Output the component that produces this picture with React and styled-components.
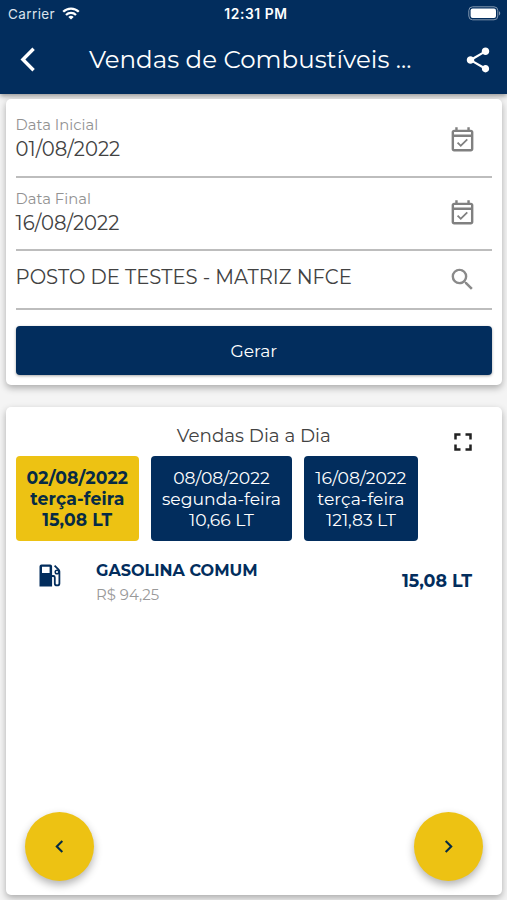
import React, { useState } from "react";
import styled, { createGlobalStyle } from "styled-components";
import {
  MdShare,
  MdOutlineEventAvailable,
  MdSearch,
  MdFullscreen,
  MdChevronLeft,
  MdChevronRight,
} from "react-icons/md";

const NAVY = "#022d5d";
const YELLOW = "#edc213";

const GlobalStyle = createGlobalStyle`
  * {
    box-sizing: border-box;
  }

  body {
    margin: 0;
    background-color: #f4f4f4;
    font-family: Montserrat, Inter, "Open Sans", sans-serif;
    color: #424242;
  }
`;

const Page = styled.div`
  display: flex;
  flex-direction: column;
  height: 900px;
  overflow: hidden;
`;

const Header = styled.header`
  height: 94px;
  flex-shrink: 0;
  background-color: ${NAVY};
  color: #ffffff;
  box-shadow: 0 2px 5px rgba(0, 0, 0, 0.4);
`;

const StatusBar = styled.div`
  display: grid;
  grid-template-columns: 1fr auto 1fr;
  align-items: center;
  height: 27px;
  padding: 0 6px 0 8px;
  font-family: Inter, sans-serif;
  font-size: 13.5px;
`;

const Carrier = styled.div`
  display: flex;
  align-items: center;
  gap: 7px;
  color: #dbe3ec;
  letter-spacing: 0.4px;
`;

const Clock = styled.div`
  padding-left: 3px;
  font-weight: 600;
  font-size: 13.8px;
  letter-spacing: 0.6px;
`;

const Battery = styled.svg`
  justify-self: end;
`;

const NavBar = styled.div`
  display: flex;
  align-items: center;
  height: 65px;
  padding: 0 14px 0 20px;
`;

const IconButton = styled.button`
  display: flex;
  padding: 0;
  border: none;
  background: none;
  color: ${(props) => props.$color || "inherit"};
  cursor: pointer;
`;

const Title = styled.h1`
  flex: 1;
  margin: 0 0 1px 53px;
  font-size: 24.5px;
  font-weight: 400;
  white-space: nowrap;
`;

const Card = styled.section`
  margin: 0 5px 0 6px;
  border-radius: 5px;
  background-color: #ffffff;
  box-shadow: 0 3px 7px rgba(0, 0, 0, 0.3);
`;

const FilterCard = styled(Card)`
  height: 286px;
  margin-top: 5px;
  padding: 0 10px 0 9.6px;
`;

const Field = styled.div`
  display: flex;
  align-items: center;
  justify-content: space-between;
  height: ${(props) => props.$height}px;
  padding-top: ${(props) => props.$top || 0}px;
  padding-right: 15px;
  border-bottom: 2px solid #bdbdbd;
`;

const FieldLabel = styled.div`
  font-size: 14.8px;
  line-height: 18px;
  color: #929292;
`;

const FieldValue = styled.div`
  font-size: 19.6px;
  line-height: 30px;
`;

const CompanyValue = styled(FieldValue)`
  padding-bottom: 5px;
`;

const GenerateButton = styled.button`
  width: 100%;
  height: 49px;
  margin-top: 16px;
  border: none;
  border-radius: 4px;
  background-color: ${NAVY};
  color: #ffffff;
  font-family: inherit;
  font-size: 17.1px;
  box-shadow: 0 1px 3px rgba(0, 0, 0, 0.35);
  cursor: pointer;
`;

const SalesCard = styled(Card)`
  display: flex;
  flex-direction: column;
  height: 488px;
  margin-top: 22px;
  padding: 0 10px 0 9.6px;
`;

const SalesHeader = styled.div`
  display: grid;
  grid-template-columns: 1fr auto 1fr;
  height: 48.6px;
  padding-top: 17px;
`;

const SalesTitle = styled.h2`
  grid-column: 2;
  margin: 0;
  font-size: 18.3px;
  font-weight: 400;
  line-height: 24px;
`;

const ExpandButton = styled(IconButton)`
  justify-self: end;
  margin: 3px 14px 0 0;
`;

const Days = styled.div`
  display: flex;
  gap: 12.2px;
`;

const Day = styled.button`
  width: ${(props) => props.$width}px;
  height: 85.4px;
  padding: 1px 0 0;
  border: none;
  border-radius: 4px;
  background-color: ${(props) => (props.$active ? YELLOW : NAVY)};
  color: ${(props) => (props.$active ? "#062b45" : "#ffffff")};
  font-family: inherit;
  font-size: 17.2px;
  font-weight: ${(props) => (props.$active ? 700 : 400)};
  line-height: 21px;
  letter-spacing: ${(props) => (props.$active ? 0.15 : 0)}px;
  cursor: pointer;
`;

const Product = styled.div`
  display: flex;
  height: 78px;
  padding: 17px 20px 0 23.4px;
`;

const ProductIcon = styled.div`
  display: flex;
  padding-top: 6px;
`;

const ProductInfo = styled.div`
  flex: 1;
  margin-left: 35px;
`;

const ProductName = styled.div`
  font-size: 16.1px;
  font-weight: 700;
  line-height: 24px;
  color: ${NAVY};
`;

const ProductPrice = styled.div`
  font-size: 14.9px;
  line-height: 27px;
  color: #999999;
`;

const ProductAmount = styled.div`
  font-size: 17.5px;
  font-weight: 700;
  line-height: 46px;
  color: ${NAVY};
`;

const Pager = styled.div`
  display: flex;
  justify-content: space-between;
  margin-top: auto;
  padding: 0 9px 14px 9.4px;
`;

const RoundButton = styled.button`
  display: flex;
  align-items: center;
  justify-content: center;
  width: 69px;
  height: 69px;
  padding: 0;
  border: none;
  border-radius: 50%;
  background-color: ${YELLOW};
  color: #062b45;
  box-shadow: 0 4px 8px rgba(0, 0, 0, 0.3);
  cursor: pointer;
`;

const WifiIcon = () => (
  <svg width="18" height="13" viewBox="0 0 18 13" fill="none" stroke="#fff">
    <path d="M1.2 4.8a11 11 0 0 1 15.6 0" strokeWidth="2.3" />
    <path d="M4 7.9a7 7 0 0 1 10 0" strokeWidth="2.2" />
    <path d="M9 12.6 6.3 10a3.9 3.9 0 0 1 5.4 0z" fill="#fff" stroke="none" />
  </svg>
);

const BatteryIcon = () => (
  <Battery width="33" height="15" viewBox="0 0 33 15">
    <rect x="0.8" y="0.8" width="29" height="13" rx="3.8" fill="none" stroke="#8297b0" />
    <rect x="2.6" y="2.6" width="25.4" height="9.4" rx="2" fill="#fff" />
    <path d="M31 5.2c1.7.6 1.7 3.6 0 4.2z" fill="#8297b0" />
  </Battery>
);

const BackIcon = () => (
  <svg width="16" height="25" viewBox="0 0 16 25" fill="none">
    <path d="M13.6 1.7 2.9 12.5l10.7 10.8" stroke="#fff" strokeWidth="3.4" />
  </svg>
);

const PumpIcon = () => (
  <svg width="22" height="23" viewBox="0 0 22 23">
    <path
      fillRule="evenodd"
      d="M2.5 0.5h8.6a2 2 0 0 1 2 2v20H0.5v-20a2 2 0 0 1 2-2zM3 2.8v6.3h7.6V2.8z"
      fill={NAVY}
    />
    <path
      d="M13 12h1.3c1 0 1.5.5 1.5 1.5v6c0 2.6 4.6 2.6 4.6 0V7.5c0-.8-.3-1.3-.8-1.8l-4-4"
      fill="none"
      stroke={NAVY}
      strokeWidth="1.8"
    />
    <circle cx="18" cy="8" r="1.8" fill="none" stroke={NAVY} strokeWidth="1.5" />
  </svg>
);

const days = [
  { date: "02/08/2022", weekday: "terça-feira", amount: "15,08 LT", width: 123.4 },
  { date: "08/08/2022", weekday: "segunda-feira", amount: "10,66 LT", width: 140.6 },
  { date: "16/08/2022", weekday: "terça-feira", amount: "121,83 LT", width: 113.8 },
];

const App = () => {
  const [selected, setSelected] = useState(0);

  const handlePrevious = () => {
    setSelected(Math.max(selected - 1, 0));
  };

  const handleNext = () => {
    setSelected(Math.min(selected + 1, days.length - 1));
  };

  return (
    <Page>
      <GlobalStyle />
      <Header>
        <StatusBar>
          <Carrier>
            Carrier
            <WifiIcon />
          </Carrier>
          <Clock>12:31 PM</Clock>
          <BatteryIcon />
        </StatusBar>
        <NavBar>
          <IconButton>
            <BackIcon />
          </IconButton>
          <Title>Vendas de Combustíveis ...</Title>
          <IconButton>
            <MdShare size={30} />
          </IconButton>
        </NavBar>
      </Header>

      <FilterCard>
        <Field $height={79} $top={5}>
          <div>
            <FieldLabel>Data Inicial</FieldLabel>
            <FieldValue>01/08/2022</FieldValue>
          </div>
          <IconButton $color="#808080">
            <MdOutlineEventAvailable size={29} />
          </IconButton>
        </Field>
        <Field $height={73}>
          <div>
            <FieldLabel>Data Final</FieldLabel>
            <FieldValue>16/08/2022</FieldValue>
          </div>
          <IconButton $color="#808080">
            <MdOutlineEventAvailable size={29} />
          </IconButton>
        </Field>
        <Field $height={59}>
          <CompanyValue>POSTO DE TESTES - MATRIZ NFCE</CompanyValue>
          <IconButton $color="#8a8a8a">
            <MdSearch size={29} />
          </IconButton>
        </Field>
        <GenerateButton>Gerar</GenerateButton>
      </FilterCard>

      <SalesCard>
        <SalesHeader>
          <SalesTitle>Vendas Dia a Dia</SalesTitle>
          <ExpandButton $color="#222222">
            <MdFullscreen size={30} />
          </ExpandButton>
        </SalesHeader>
        <Days>
          {days.map((day, index) => (
            <Day
              key={day.date}
              $width={day.width}
              $active={index === selected}
              onClick={() => setSelected(index)}
            >
              <div>{day.date}</div>
              <div>{day.weekday}</div>
              <div>{day.amount}</div>
            </Day>
          ))}
        </Days>
        <Product>
          <ProductIcon>
            <PumpIcon />
          </ProductIcon>
          <ProductInfo>
            <ProductName>GASOLINA COMUM</ProductName>
            <ProductPrice>R$ 94,25</ProductPrice>
          </ProductInfo>
          <ProductAmount>15,08 LT</ProductAmount>
        </Product>
        <Pager>
          <RoundButton onClick={handlePrevious}>
            <MdChevronLeft size={25} />
          </RoundButton>
          <RoundButton onClick={handleNext}>
            <MdChevronRight size={25} />
          </RoundButton>
        </Pager>
      </SalesCard>
    </Page>
  );
};

export default App;
